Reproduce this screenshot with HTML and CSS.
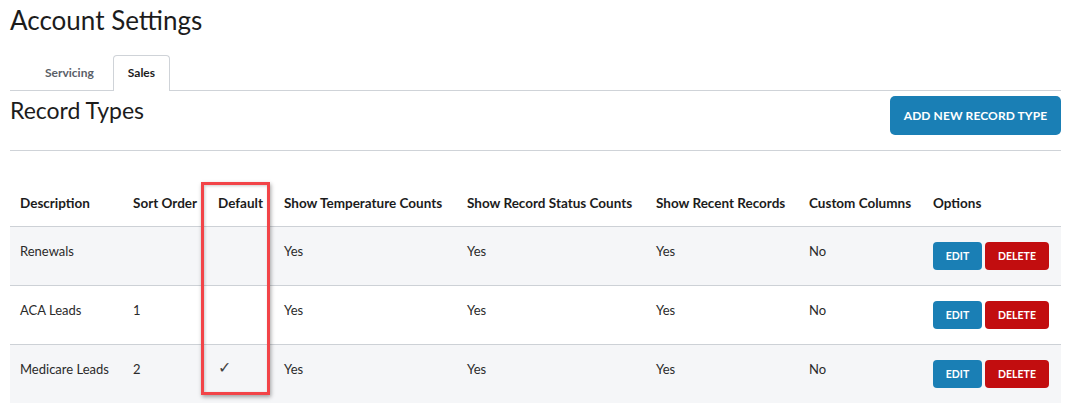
FILE: index.html
```html
<!DOCTYPE html>
<html>
<head>
<meta charset="utf-8">
<link rel="stylesheet" href="styles.css">
</head>
<body>
<div class="page">
  <h1 class="title">Account Settings</h1>
  <div class="tabs">
    <div class="tab">Servicing</div>
    <div class="tab active">Sales</div>
  </div>
  <div class="section-head">
    <h2 class="subtitle">Record Types</h2>
    <button class="btn btn-primary">ADD NEW RECORD TYPE</button>
  </div>
  <div class="table-wrap">
    <table class="grid">
      <colgroup>
        <col class="c1"><col class="c2"><col class="c3"><col class="c4"><col class="c5"><col class="c6"><col class="c7"><col class="c8">
      </colgroup>
      <thead>
        <tr>
          <th>Description</th><th>Sort Order</th><th>Default</th><th>Show Temperature Counts</th><th>Show Record Status Counts</th><th>Show Recent Records</th><th>Custom Columns</th><th>Options</th>
        </tr>
      </thead>
      <tbody>
        <tr class="odd">
          <td>Renewals</td><td></td><td></td><td>Yes</td><td>Yes</td><td>Yes</td><td>No</td>
          <td class="opts"><button class="btn btn-sm btn-edit">EDIT</button><button class="btn btn-sm btn-del">DELETE</button></td>
        </tr>
        <tr>
          <td>ACA Leads</td><td>1</td><td></td><td>Yes</td><td>Yes</td><td>Yes</td><td>No</td>
          <td class="opts"><button class="btn btn-sm btn-edit">EDIT</button><button class="btn btn-sm btn-del">DELETE</button></td>
        </tr>
        <tr class="odd">
          <td>Medicare Leads</td><td>2</td><td class="check">✓</td><td>Yes</td><td>Yes</td><td>Yes</td><td>No</td>
          <td class="opts"><button class="btn btn-sm btn-edit">EDIT</button><button class="btn btn-sm btn-del">DELETE</button></td>
        </tr>
      </tbody>
    </table>
    <div class="highlight"></div>
  </div>
</div>
</body>
</html>
```

FILE: styles.css
```css
* { box-sizing: border-box; }
body {
  margin: 0;
  background: #fff;
  font-family: Lato, "Open Sans", sans-serif;
  color: #222;
}
.page {
  padding: 0 13px 0 10px;
}
.title {
  margin: 0;
  padding-top: 5px;
  font-size: 26px;
  font-weight: 400;
  line-height: 30px;
  color: #1c1c1c;
}
.tabs {
  display: flex;
  margin-top: 20px;
  padding-left: 20px;
  border-bottom: 1px solid #cfd3d8;
  height: 36px;
}
.tab {
  padding: 0 14px;
  font-size: 12px;
  font-weight: 700;
  color: #5a6068;
  line-height: 34px;
  border: 1px solid transparent;
  border-bottom: none;
  border-radius: 4px 4px 0 0;
}
.tab.active {
  color: #1c1c1c;
  border-color: #cfd3d8;
  background: #fff;
  height: 36px;
  margin-left: 4px;
}
.section-head {
  display: flex;
  justify-content: space-between;
  align-items: flex-start;
  padding-bottom: 15px;
  border-bottom: 1px solid #cfd3d8;
}
.subtitle {
  margin: 0;
  padding-top: 6px;
  font-size: 23px;
  font-weight: 400;
  line-height: 26px;
  color: #1c1c1c;
}
.btn {
  border: none;
  font-family: Lato, "Open Sans", sans-serif;
  color: #fff;
  cursor: pointer;
}
.btn-primary {
  margin-top: 5px;
  background: #1a7fb5;
  border-radius: 5px;
  width: 171px;
  height: 39px;
  font-size: 12px;
  font-weight: 700;
  letter-spacing: 0.1px;
}
.table-wrap {
  position: relative;
  margin-top: 28px;
}
.grid {
  width: 100%;
  border-collapse: collapse;
  table-layout: fixed;
  font-size: 13px;
}
.c1 { width: 113px; }
.c2 { width: 85px; }
.c3 { width: 66px; }
.c4 { width: 183px; }
.c5 { width: 189px; }
.c6 { width: 153px; }
.c7 { width: 124px; }
.c8 { width: 138px; }
.grid th {
  text-align: left;
  font-weight: 700;
  font-size: 13.5px;
  color: #1c1c1c;
  padding: 2px 0 0 10px;
  height: 47px;
  vertical-align: middle;
  border-bottom: 1px solid #cdd1d6;
  white-space: nowrap;
}
.grid td {
  padding: 14px 0 0 10px;
  height: 59px;
  vertical-align: top;
  line-height: 20px;
  color: #2a2a2a;
  border-bottom: 1px solid #cdd1d6;
}
.grid tbody tr:last-child td { border-bottom: none; }
.grid tr.odd td { background: #f5f6f8; }
.grid td.check { font-family: "DejaVu Sans", sans-serif; font-size: 16px; font-weight: 300; padding-left: 10px; padding-top: 13px; color: #444; }
.grid td.opts { padding-top: 15px; white-space: nowrap; }
.btn-sm {
  height: 28px;
  border-radius: 4px;
  font-size: 10.5px;
  font-weight: 700;
  vertical-align: top;
}
.btn-edit { width: 49px; background: #1a7fb5; }
.btn-del { width: 64px; margin-left: 3px; background: #c20d0f; }
.highlight {
  position: absolute;
  left: 191px;
  top: 3px;
  width: 69px;
  height: 213px;
  border: 3px solid #f24448;
  box-shadow: 1px 2px 4px rgba(0,0,0,0.35), inset 1px 1px 3px rgba(0,0,0,0.2);
  pointer-events: none;
}
```
